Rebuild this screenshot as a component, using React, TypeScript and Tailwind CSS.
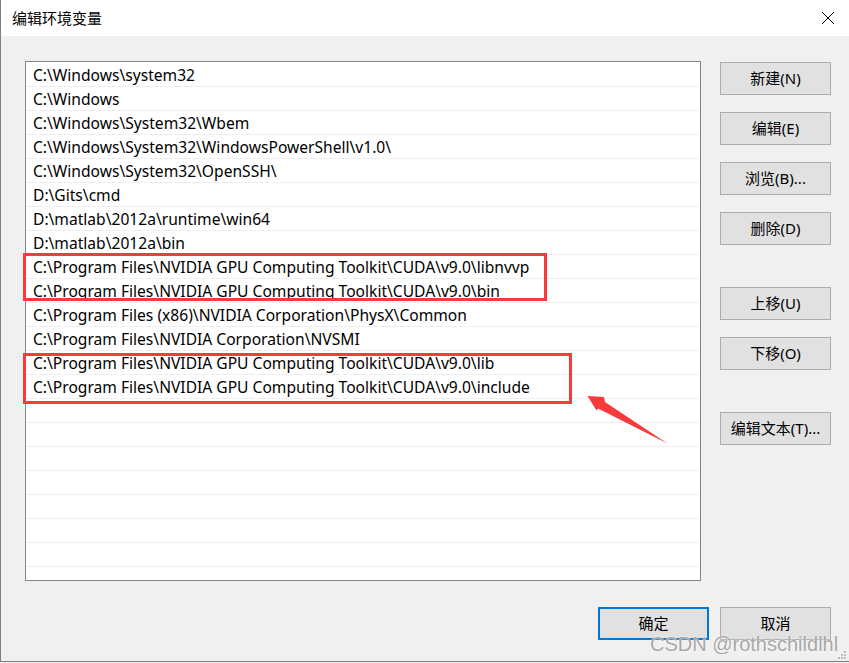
import React from 'react'

// Paths as they show up in the dialog
const paths = [
  'C:\\Windows\\system32',
  'C:\\Windows',
  'C:\\Windows\\System32\\Wbem',
  'C:\\Windows\\System32\\WindowsPowerShell\\v1.0\\',
  'C:\\Windows\\System32\\OpenSSH\\',
  'D:\\Gits\\cmd',
  'D:\\matlab\\2012a\\runtime\\win64',
  'D:\\matlab\\2012a\\bin',
  'C:\\Program Files\\NVIDIA GPU Computing Toolkit\\CUDA\\v9.0\\libnvvp',
  'C:\\Program Files\\NVIDIA GPU Computing Toolkit\\CUDA\\v9.0\\bin',
  'C:\\Program Files (x86)\\NVIDIA Corporation\\PhysX\\Common',
  'C:\\Program Files\\NVIDIA Corporation\\NVSMI',
  'C:\\Program Files\\NVIDIA GPU Computing Toolkit\\CUDA\\v9.0\\lib',
  'C:\\Program Files\\NVIDIA GPU Computing Toolkit\\CUDA\\v9.0\\include',
]

const rows = [...paths, ...Array(8).fill('')]

const font = "font-['Segoe_UI','Noto_Sans','Noto_Sans_CJK_SC',sans-serif]"

function Btn({ label, primary = false }: { label: string; primary?: boolean }) {
  return (
    <div
      className={`w-[111px] h-[33px] flex items-center justify-center bg-[#e1e1e1] text-[15px] text-black ${
        primary ? 'border-2 border-[#0078d7]' : 'border border-[#adadad]'
      }`}
    >
      {label}
    </div>
  )
}

export default function App() {
  return (
    <div className={`relative w-[849px] h-[663px] overflow-hidden bg-[#f0f0f0] ${font}`}>
      <div className="h-[662px] flex flex-col border-l border-b border-[#7f7f7f]">
        {/* Title bar */}
        <div className="h-[36px] shrink-0 bg-white flex items-center pl-[11px] text-[15px] text-black">
          编辑环境变量
        </div>

        <div className="flex pt-[25px] pl-[24px]">
          {/* Path list */}
          <div className="w-[676px] h-[520px] bg-white border border-[#828790] overflow-hidden pt-[1px]">
            {rows.map((p, i) => (
              <div
                key={i}
                className="h-[24px] shrink-0 flex items-center border-b border-[#efefef] pl-[7px] pt-[2px] text-[15.6px] text-black whitespace-nowrap"
              >
                {p}
              </div>
            ))}
          </div>

          {/* Action buttons */}
          <div className="ml-[19px] mt-[1px] flex flex-col">
            <div className="flex flex-col gap-[17px]">
              <Btn label="新建(N)" />
              <Btn label="编辑(E)" />
              <Btn label="浏览(B)..." />
              <Btn label="删除(D)" />
            </div>
            <div className="mt-[42px] flex flex-col gap-[17px]">
              <Btn label="上移(U)" />
              <Btn label="下移(O)" />
            </div>
            <div className="mt-[42px]">
              <Btn label="编辑文本(T)..." />
            </div>
          </div>
        </div>

        {/* OK / Cancel */}
        <div className="mt-[26px] flex justify-end gap-[11px] pr-[18px]">
          <Btn label="确定" primary />
          <Btn label="取消" />
        </div>
      </div>

      {/* Close button */}
      <svg className="absolute left-[821px] top-[11px]" width="14" height="14" viewBox="0 0 14 14">
        <path d="M1 1 L13 13 M13 1 L1 13" stroke="#000" strokeWidth="1" fill="none" />
      </svg>

      {/* Red annotation boxes */}
      <div className="absolute left-[23px] top-[253px] w-[524px] h-[48px] border-[3px] border-[#f83a3a]" />
      <div className="absolute left-[23px] top-[353px] w-[549px] h-[51px] border-[3px] border-[#f83a3a]" />

      {/* Arrow */}
      <svg className="absolute left-0 top-0 pointer-events-none" width="849" height="663">
        <polygon
          points="587.5,396 604,397 605,402 667.5,443.5 598,408.5 596.5,410.5"
          fill="#f83a3a"
        />
      </svg>

      {/* Resize grip */}
      <svg className="absolute left-[836px] top-[650px]" width="12" height="11" viewBox="0 0 12 11">
        <rect x="8" y="1" width="2" height="2" fill="#bdbdbd" />
        <rect x="5" y="4" width="2" height="2" fill="#bdbdbd" />
        <rect x="8" y="4" width="2" height="2" fill="#bdbdbd" />
        <rect x="2" y="7" width="2" height="2" fill="#bdbdbd" />
        <rect x="5" y="7" width="2" height="2" fill="#bdbdbd" />
        <rect x="8" y="7" width="2" height="2" fill="#bdbdbd" />
      </svg>

      {/* Watermark */}
      <div className="absolute left-[650px] top-[632px] text-[20px] leading-[24px] text-[#a8a8a8] font-['Liberation_Sans',sans-serif] [text-shadow:0_0_2px_#ffffff] whitespace-nowrap">
        CSDN @rothschildlhl
      </div>
    </div>
  )
}
